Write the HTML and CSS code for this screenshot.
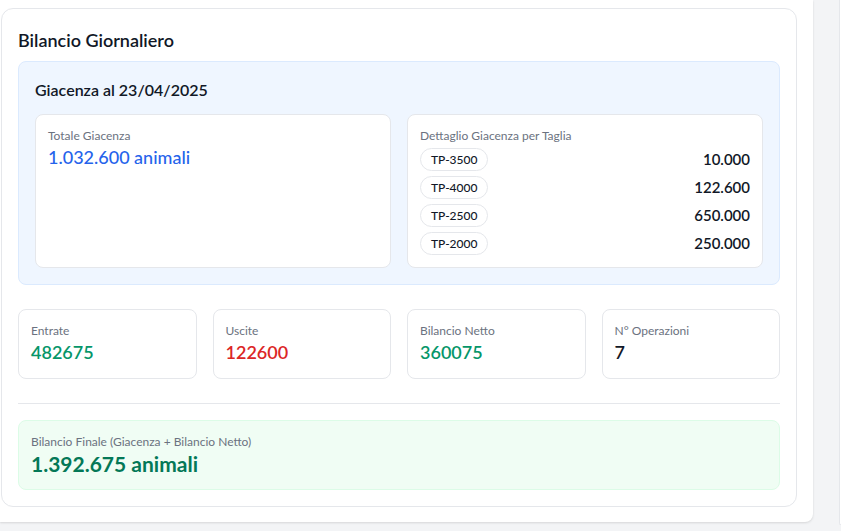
FILE: index.html
```html
<!DOCTYPE html>
<html lang="it">
<head>
<meta charset="utf-8">
<title>Bilancio Giornaliero</title>
<link rel="stylesheet" href="styles.css">
</head>
<body>
<div class="page">
  <main class="main">
    <section class="card">
      <h2 class="card-title">Bilancio Giornaliero</h2>
      <div class="stock">
        <h3 class="stock-title">Giacenza al 23/04/2025</h3>
        <div class="stock-grid">
          <div class="box">
            <div class="label">Totale Giacenza</div>
            <div class="total">1.032.600 animali</div>
          </div>
          <div class="box">
            <div class="label label-gap">Dettaglio Giacenza per Taglia</div>
            <div class="rows">
              <div class="row"><span class="pill">TP-3500</span><span class="qty">10.000</span></div>
              <div class="row"><span class="pill">TP-4000</span><span class="qty">122.600</span></div>
              <div class="row"><span class="pill">TP-2500</span><span class="qty">650.000</span></div>
              <div class="row"><span class="pill">TP-2000</span><span class="qty">250.000</span></div>
            </div>
          </div>
        </div>
      </div>
      <div class="stats">
        <div class="stat"><div class="label">Entrate</div><div class="stat-value green">482675</div></div>
        <div class="stat"><div class="label">Uscite</div><div class="stat-value red">122600</div></div>
        <div class="stat"><div class="label">Bilancio Netto</div><div class="stat-value green">360075</div></div>
        <div class="stat"><div class="label">N° Operazioni</div><div class="stat-value dark">7</div></div>
      </div>
      <hr class="divider">
      <div class="final">
        <div class="label">Bilancio Finale (Giacenza + Bilancio Netto)</div>
        <div class="final-value">1.392.675 animali</div>
      </div>
    </section>
  </main>
  <aside class="side"></aside>
</div>
</body>
</html>
```
FILE: styles.css
```css
* { box-sizing: border-box; }
html, body { margin: 0; padding: 0; }
body {
  background: #f3f4f6;
  font-family: Lato, "Open Sans", sans-serif;
  color: #111827;
  overflow: hidden;
}
.page {
  display: flex;
  align-items: flex-start;
  width: 841px;
  height: 531px;
  overflow: hidden;
}
.main {
  flex: 0 0 813px;
  background: #ffffff;
  padding: 8px 16px 15px 1px;
  border-radius: 0 0 8px 0;
  box-shadow: 0 1px 3px rgba(0,0,0,0.08), 0 1px 2px rgba(0,0,0,0.05);
}
.side {
  flex: 0 0 2px;
  margin-left: 26px;
  margin-top: -10px;
  height: 535px;
  background: #ffffff;
  border-left: 1px solid #e5e7eb;
  border-bottom: 1px solid #e5e7eb;
  border-radius: 0 0 0 2px;
}
.card {
  border: 1px solid #e5e7eb;
  border-radius: 12px;
  padding: 17px 16px 16px 16px;
  background: #ffffff;
}
.card-title {
  margin: 0 0 7px 0;
  font-size: 18px;
  line-height: 28px;
  font-weight: 600;
  color: #111827;
}
.stock {
  background: #eff6ff;
  border: 1px solid #dbeafe;
  border-radius: 8px;
  padding: 16px;
}
.stock-title {
  margin: 0 0 12px 0;
  font-size: 16px;
  line-height: 24px;
  font-weight: 600;
}
.stock-grid {
  display: grid;
  grid-template-columns: 1fr 1fr;
  gap: 16px;
}
.box {
  background: #ffffff;
  border: 1px solid #e5e7eb;
  border-radius: 8px;
  padding: 12px;
}
.label {
  font-size: 12px;
  line-height: 16px;
  padding-top: 1px;
  color: #6b7280;
}
.label-gap { margin-bottom: 3px; }
.total {
  font-size: 18px;
  line-height: 27px;
  font-weight: 500;
  color: #2563eb;
}
.rows {
  display: flex;
  flex-direction: column;
  gap: 4px;
}
.row {
  display: flex;
  justify-content: space-between;
  align-items: center;
  height: 24px;
}
.pill {
  border: 1px solid #e5e7eb;
  border-radius: 999px;
  padding: 2px 10px;
  font-size: 12px;
  line-height: 17px;
  font-weight: 500;
  color: #111827;
  background: #ffffff;
}
.qty {
  font-size: 15px;
  line-height: 20px;
  font-weight: 600;
  color: #111827;
}
.stats {
  display: grid;
  grid-template-columns: repeat(4, 1fr);
  gap: 16px;
  margin-top: 24px;
}
.stat {
  border: 1px solid #e5e7eb;
  border-radius: 8px;
  padding: 12px;
  background: #ffffff;
}
.stat-value {
  font-size: 18px;
  line-height: 27px;
  font-weight: 600;
}
.green { color: #059669; }
.red { color: #dc2626; }
.dark { color: #111827; }
.divider {
  border: 0;
  border-top: 1px solid #e5e7eb;
  margin: 24px 0 16px 0;
}
.final {
  background: #f0fdf4;
  border: 1px solid #dcfce7;
  border-radius: 8px;
  padding: 12px;
}
.final-value {
  font-size: 21px;
  line-height: 27px;
  font-weight: 700;
  color: #047857;
}
```
